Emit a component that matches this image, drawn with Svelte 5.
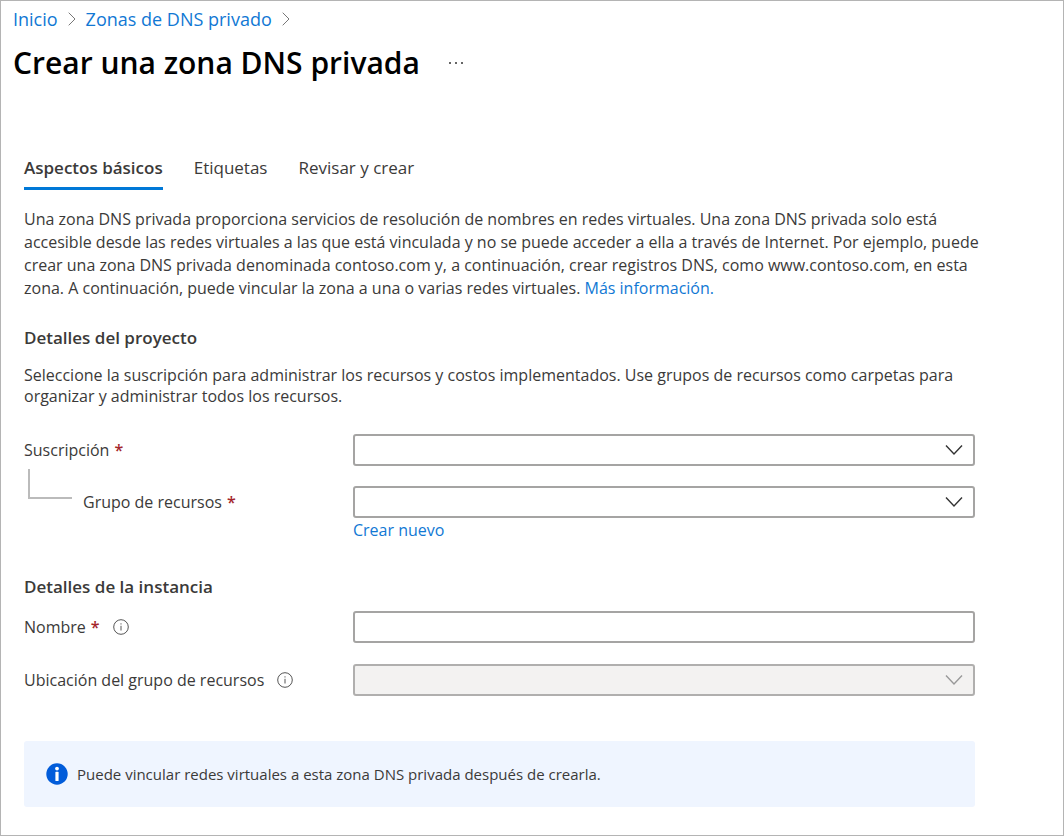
<script lang="ts">
	const breadcrumbs = ['Inicio', 'Zonas de DNS privado'];
	const tabs = ['Aspectos básicos', 'Etiquetas', 'Revisar y crear'];

	let activeTab = $state(0);
	let subscription = $state('');
	let resourceGroup = $state('');
	let zoneName = $state('');
</script>

{#snippet chevron()}
	<svg class="chevron" viewBox="0 0 18 12" aria-hidden="true">
		<path d="M1 1.5l8 8.5 8-8.5" />
	</svg>
{/snippet}

{#snippet infoIcon()}
	<svg class="info" viewBox="0 0 16 16" aria-hidden="true">
		<circle cx="8" cy="8" r="7.3" />
		<path d="M8 6.8v4.7M8 4.3v1.2" />
	</svg>
{/snippet}

<div class="blade">
	<nav class="breadcrumbs" aria-label="Ruta">
		{#each breadcrumbs as crumb}
			<a href="#top">{crumb}</a>
			<svg viewBox="0 0 8 14" aria-hidden="true"><path d="M.7.7L7 7 .7 13.3" /></svg>
		{/each}
	</nav>

	<header>
		<h1>Crear una zona DNS privada</h1>
		<button class="more" aria-label="Más">
			<svg viewBox="0 0 16 4" aria-hidden="true">
				<circle cx="2" cy="2" r="1" />
				<circle cx="8" cy="2" r="1" />
				<circle cx="14" cy="2" r="1" />
			</svg>
		</button>
	</header>

	<main>
		<div class="tabs" role="tablist">
			{#each tabs as tab, index}
				<button
					role="tab"
					class:active={index === activeTab}
					aria-selected={index === activeTab}
					onclick={() => (activeTab = index)}
				>
					{tab}
				</button>
			{/each}
		</div>

		<p class="intro">
			Una zona DNS privada proporciona servicios de resolución de nombres en redes virtuales. Una zona DNS privada solo está
			accesible desde las redes virtuales a las que está vinculada y no se puede acceder a ella a través de Internet. Por ejemplo, puede
			crear una zona DNS privada denominada contoso.com y, a continuación, crear registros DNS, como www.contoso.com, en esta
			zona. A continuación, puede vincular la zona a una o varias redes virtuales.
			<a href="#info">Más información.</a>
		</p>

		<section>
			<h2>Detalles del proyecto</h2>
			<p class="description">
				Seleccione la suscripción para administrar los recursos y costos implementados. Use grupos de recursos como carpetas para
				organizar y administrar todos los recursos.
			</p>

			<div class="row">
				<label for="subscription">Suscripción <span class="required">*</span></label>
				<div class="select">
					<select id="subscription" bind:value={subscription} required>
						<option value=""></option>
					</select>
					{@render chevron()}
				</div>
			</div>
			<div class="row">
				<div class="nested">
					<span class="branch"></span>
					<label for="group">Grupo de recursos <span class="required">*</span></label>
				</div>
				<div class="select">
					<select id="group" bind:value={resourceGroup} required>
						<option value=""></option>
					</select>
					{@render chevron()}
				</div>
			</div>
			<div class="row below">
				<a href="#new">Crear nuevo</a>
			</div>
		</section>

		<section class="instance">
			<h2>Detalles de la instancia</h2>
			<div class="row">
				<label for="name">Nombre <span class="required">*</span> {@render infoIcon()}</label>
				<input id="name" type="text" bind:value={zoneName} required />
			</div>
			<div class="row">
				<label for="location">Ubicación del grupo de recursos {@render infoIcon()}</label>
				<div class="select">
					<select id="location" disabled>
						<option value=""></option>
					</select>
					{@render chevron()}
				</div>
			</div>
		</section>

		<div class="notice">
			<svg viewBox="0 0 22 22" aria-hidden="true">
				<circle cx="11" cy="11" r="10.7" fill="#015cda" />
				<circle cx="11" cy="5.6" r="1.9" fill="#fff" />
				<rect x="9.4" y="8.8" width="3.2" height="9.2" rx="0.6" fill="#fff" />
			</svg>
			<span>Puede vincular redes virtuales a esta zona DNS privada después de crearla.</span>
		</div>
	</main>
</div>

<style>
	:global(body) {
		background: #fff;
	}

	.blade {
		box-sizing: border-box;
		min-height: 100vh;
		padding: 7px 12px 28px;
		border: 1px solid #b4b4b4;
		font-family: 'Segoe UI', 'Open Sans', sans-serif;
		font-size: 16px;
		line-height: 22px;
		color: #3b3a39;
	}

	a {
		color: #1178d4;
		text-decoration: none;
	}

	a:hover {
		text-decoration: underline;
	}

	.breadcrumbs {
		display: flex;
		align-items: center;
		gap: 10px;
		font-size: 18px;
	}

	.breadcrumbs svg {
		width: 8px;
		height: 14px;
		fill: none;
		stroke: #777;
	}

	header {
		display: flex;
		align-items: center;
		gap: 24px;
		margin-top: 13px;
	}

	h1 {
		margin: 0;
		font-size: 30px;
		line-height: 40px;
		font-weight: 600;
		color: #000;
	}

	.more {
		display: flex;
		padding: 4px;
		border: none;
		background: none;
		cursor: pointer;
	}

	.more svg {
		width: 16px;
		height: 4px;
		fill: #333;
	}

	main {
		margin: 70px 76px 0 11px;
	}

	.tabs {
		display: flex;
		gap: 31px;
	}

	.tabs button {
		padding: 4px 0 8px;
		border: none;
		border-bottom: 3px solid transparent;
		background: none;
		font: inherit;
		font-size: 17px;
		color: inherit;
		cursor: pointer;
	}

	.tabs .active {
		border-color: #0078d7;
		font-weight: 600;
	}

	.intro {
		margin: 18px -12px 0 0;
		line-height: 23px;
	}

	h2 {
		margin: 0;
		font-size: 17px;
		line-height: 24px;
		font-weight: 600;
	}

	section {
		margin-top: 26px;
	}

	.description {
		margin: 15px 0 27px;
		line-height: 21px;
	}

	.row {
		display: grid;
		grid-template-columns: 329px 1fr;
		align-items: center;
	}

	.row + .row {
		margin-top: 20px;
	}

	.row + .below {
		margin-top: 1px;
	}

	.below a {
		grid-column: 2;
		justify-self: start;
	}

	label {
		display: flex;
		align-items: center;
		gap: 5px;
	}

	.required {
		color: #a4262c;
		font-weight: 600;
	}

	.info {
		width: 16px;
		height: 16px;
		margin-left: 8px;
		fill: none;
		stroke: #555;
	}

	.nested {
		display: flex;
		align-items: center;
	}

	.branch {
		align-self: flex-start;
		width: 42px;
		height: 28px;
		margin: -22px 11px 0 4px;
		border-left: 2px solid #bbb;
		border-bottom: 2px solid #bbb;
	}

	.select {
		display: grid;
	}

	select,
	.chevron {
		grid-area: 1 / 1;
	}

	select,
	input {
		box-sizing: border-box;
		width: 100%;
		height: 32px;
		padding: 0 12px;
		border: 2px solid #a5a4a3;
		border-radius: 3px;
		background: #fff;
		font: inherit;
		color: inherit;
		appearance: none;
	}

	select:focus,
	input:focus {
		outline: none;
		border-color: #0078d7;
	}

	.chevron {
		place-self: center end;
		width: 18px;
		height: 12px;
		margin-right: 12px;
		fill: none;
		stroke: #333;
		stroke-width: 1.4;
		pointer-events: none;
	}

	select:disabled {
		background: #f3f2f1;
		border-color: #b0afae;
		opacity: 1;
	}

	select:disabled + .chevron {
		stroke: #999;
	}

	.instance {
		margin-top: 34px;
	}

	.instance h2 {
		margin-bottom: 12px;
	}

	.instance .row + .row {
		margin-top: 21px;
	}

	.notice {
		display: flex;
		align-items: center;
		gap: 9px;
		margin-top: 45px;
		padding: 22px;
		border-radius: 3px;
		background: #eff5ff;
		font-size: 15px;
	}

	.notice svg {
		width: 22px;
		height: 22px;
		flex: none;
	}
</style>
